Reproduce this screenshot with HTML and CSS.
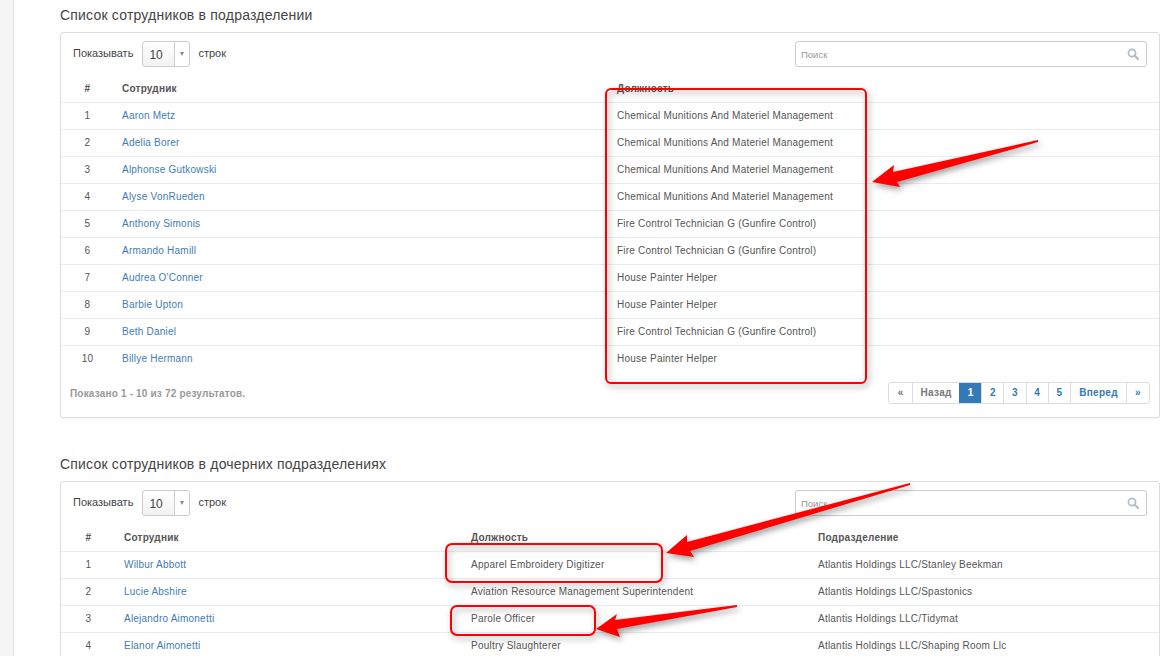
FILE: index.html
```html
<!DOCTYPE html>
<html lang="en">
<head>
  <meta charset="UTF-8" />
  <title>Подразделение</title>
  <link rel="stylesheet" href="styles.css">
</head>
<body>
  <div class="sidebar"></div>
  <div class="content">
    <h4 class="section-title">Список сотрудников в подразделении</h4>
    <div class="panel">
      <div class="toolbar">
        <span class="toolbar-label">Показывать</span>
        <div class="page-size"><span class="page-size-value">10</span><span class="page-size-caret"></span></div>
        <span class="toolbar-label">строк</span>
        <div class="search">
          <input type="text" placeholder="Поиск" />
          <svg width="12" height="12" viewBox="0 0 12 12"><circle cx="5" cy="5" r="3.6" fill="none" stroke="#b4bcc8" stroke-width="1.7"/><path d="M7.8 7.8L11 11" stroke="#b4bcc8" stroke-width="2.2" stroke-linecap="round"/></svg>
        </div>
      </div>
      <table class="staff staff-main">
        <thead>
          <tr><th class="num">#</th><th>Сотрудник</th><th>Должность</th></tr>
        </thead>
        <tbody>
          <tr><td class="num">1</td><td><a href="#">Aaron Metz</a></td><td>Chemical Munitions And Materiel Management</td></tr>
          <tr><td class="num">2</td><td><a href="#">Adelia Borer</a></td><td>Chemical Munitions And Materiel Management</td></tr>
          <tr><td class="num">3</td><td><a href="#">Alphonse Gutkowski</a></td><td>Chemical Munitions And Materiel Management</td></tr>
          <tr><td class="num">4</td><td><a href="#">Alyse VonRueden</a></td><td>Chemical Munitions And Materiel Management</td></tr>
          <tr><td class="num">5</td><td><a href="#">Anthony Simonis</a></td><td>Fire Control Technician G (Gunfire Control)</td></tr>
          <tr><td class="num">6</td><td><a href="#">Armando Hamill</a></td><td>Fire Control Technician G (Gunfire Control)</td></tr>
          <tr><td class="num">7</td><td><a href="#">Audrea O'Conner</a></td><td>House Painter Helper</td></tr>
          <tr><td class="num">8</td><td><a href="#">Barbie Upton</a></td><td>House Painter Helper</td></tr>
          <tr><td class="num">9</td><td><a href="#">Beth Daniel</a></td><td>Fire Control Technician G (Gunfire Control)</td></tr>
          <tr><td class="num">10</td><td><a href="#">Billye Hermann</a></td><td>House Painter Helper</td></tr>
        </tbody>
      </table>
      <div class="panel-footer">
        <span class="summary">Показано 1 - 10 из 72 результатов.</span>
        <div class="pager">
          <a class="muted w-arrow" href="#">«</a>
          <a class="muted w-prev" href="#">Назад</a>
          <a class="current w-num" href="#">1</a>
          <a class="w-num" href="#">2</a>
          <a class="w-num" href="#">3</a>
          <a class="w-num" href="#">4</a>
          <a class="w-num" href="#">5</a>
          <a class="w-next" href="#">Вперед</a>
          <a class="w-arrow" href="#">»</a>
        </div>
      </div>
    </div>

    <h4 class="section-title section-title-second">Список сотрудников в дочерних подразделениях</h4>
    <div class="panel">
      <div class="toolbar">
        <span class="toolbar-label">Показывать</span>
        <div class="page-size"><span class="page-size-value">10</span><span class="page-size-caret"></span></div>
        <span class="toolbar-label">строк</span>
        <div class="search">
          <input type="text" placeholder="Поиск" />
          <svg width="12" height="12" viewBox="0 0 12 12"><circle cx="5" cy="5" r="3.6" fill="none" stroke="#b4bcc8" stroke-width="1.7"/><path d="M7.8 7.8L11 11" stroke="#b4bcc8" stroke-width="2.2" stroke-linecap="round"/></svg>
        </div>
      </div>
      <table class="staff staff-child">
        <thead>
          <tr><th class="num">#</th><th>Сотрудник</th><th>Должность</th><th>Подразделение</th></tr>
        </thead>
        <tbody>
          <tr><td class="num">1</td><td><a href="#">Wilbur Abbott</a></td><td>Apparel Embroidery Digitizer</td><td>Atlantis Holdings LLC/Stanley Beekman</td></tr>
          <tr><td class="num">2</td><td><a href="#">Lucie Abshire</a></td><td>Aviation Resource Management Superintendent</td><td>Atlantis Holdings LLC/Spastonics</td></tr>
          <tr><td class="num">3</td><td><a href="#">Alejandro Aimonetti</a></td><td>Parole Officer</td><td>Atlantis Holdings LLC/Tidymat</td></tr>
          <tr><td class="num">4</td><td><a href="#">Elanor Aimonetti</a></td><td>Poultry Slaughterer</td><td>Atlantis Holdings LLC/Shaping Room Llc</td></tr>
        </tbody>
      </table>
    </div>
  </div>

  <!-- red marks drawn on top of the screenshot -->
  <svg class="marks" width="1175" height="656" viewBox="0 0 1175 656">
    <g fill="none" stroke="#f00" stroke-width="2">
      <rect x="606" y="89" width="260" height="294" rx="5"/>
      <rect x="446" y="544" width="216" height="38" rx="6"/>
      <rect x="451" y="606" width="144" height="29" rx="6"/>
    </g>
    <g fill="#f00">
      <polygon points="1038,140 1038,142 897,182 900,187 872,182 894,165 893,172"/>
      <polygon points="910,483 910,485 690,551 694,557 666,553 687,535 687,542"/>
      <polygon points="737,605 737,607 617,629 620,637 596,629 617,614 615,620"/>
    </g>
  </svg>
</body>
</html>
```

FILE: styles.css
```css
html, body {
  margin: 0;
  height: 656px;
  overflow: hidden;
}
body {
  font-family: "Liberation Sans", Arial, sans-serif;
  font-size: 10px;
  color: #555;
  background: white;
  display: flex;
  position: relative;
}
.sidebar {
  width: 13px;
  flex: none;
  background: #f5f5f5;
  border-right: 1px solid #e7e7e7;
}
.content {
  flex: 1;
  padding: 0 15px 0 46px;
}
.section-title {
  margin: 0;
  height: 32px;
  line-height: 31px;
  font-size: 14px;
  font-weight: normal;
  color: #444;
  letter-spacing: .2px;
}
.section-title-second {
  height: 63px;
  line-height: 34px;
  display: flex;
  align-items: flex-end;
}
.panel {
  border: 1px solid #ddd;
  border-radius: 3px;
  box-shadow: 0 1px 1px rgba(0,0,0,0.05);
  background: white;
}

.toolbar {
  display: flex;
  align-items: center;
  height: 26px;
  padding: 8px 12px 0 12px;
}
.toolbar-label {
  font-size: 11px;
  color: #444;
  margin-top: -2px;
}
.page-size {
  display: flex;
  width: 46px;
  height: 24px;
  margin: 0 8px 0 9px;
  border: 1px solid #ccc;
  border-radius: 3px;
  background: linear-gradient(#fff, #f2f2f2);
}
.page-size-value {
  flex: 1;
  padding-left: 6px;
  font-size: 12px;
  line-height: 26px;
  color: #444;
}
.page-size-caret {
  width: 14px;
  border-left: 1px solid #ccc;
  background: white;
  border-radius: 0 3px 3px 0;
  display: flex;
  justify-content: center;
  align-items: center;
}
.page-size-caret::after {
  content: "";
  border-top: 4px solid #888;
  border-left: 2.5px solid transparent;
  border-right: 2.5px solid transparent;
}
.search {
  display: flex;
  align-items: center;
  width: 350px;
  height: 24px;
  margin-left: auto;
  border: 1px solid #ccc;
  border-radius: 3px;
}
.search input {
  flex: 1;
  min-width: 0;
  border: none;
  outline: none;
  padding: 0 5px;
  font-family: inherit;
  font-size: 9.5px;
  background: transparent;
}
.search input::placeholder {
  color: #999;
}
.search svg {
  margin-right: 7px;
}

.staff {
  width: 100%;
  table-layout: fixed;
  border-collapse: collapse;
  margin-top: 8px;
  letter-spacing: .22px;
}
.staff th {
  height: 27px;
  padding: 0 10px;
  text-align: left;
  font-weight: bold;
  color: #555;
}
.staff td {
  height: 24px;
  padding: 0 10px 2px;
  border-top: 1px solid #e7ecf1;
}
.staff .num {
  text-align: center;
  padding-left: 11px;
  padding-right: 9px;
}
.staff a {
  color: #3f7cb5;
  text-decoration: none;
}
.staff-main th:nth-child(1) { width: 31px; }
.staff-main th:nth-child(2) { width: 475px; }
.staff-child th:nth-child(1) { width: 33px; }
.staff-child th:nth-child(2) { width: 327px; }
.staff-child th:nth-child(3) { width: 327px; }

.panel-footer {
  display: flex;
  justify-content: space-between;
  align-items: center;
  height: 41px;
  padding: 0 9px 4px 9px;
}
.summary {
  font-weight: bold;
  font-size: 10px;
  letter-spacing: .18px;
  color: #999;
  margin-top: 2px;
}
.pager {
  display: flex;
  height: 22px;
  border: 1px solid #ddd;
  border-radius: 3px;
  box-sizing: border-box;
}
.pager a {
  display: flex;
  justify-content: center;
  align-items: center;
  box-sizing: border-box;
  border-left: 1px solid #ddd;
  font-weight: bold;
  font-size: 10px;
  letter-spacing: .3px;
  color: #337ab7;
  text-decoration: none;
}
.pager a:first-child {
  border-left: none;
}
.pager .muted {
  color: #777;
}
.pager .current {
  background: #337ab7;
  border-color: #337ab7;
  color: white;
}
.w-arrow { width: 23px; }
.w-prev { width: 47px; }
.w-num { width: 22.2px; }
.w-next { width: 56px; }

.marks {
  position: absolute;
  left: 0;
  top: 0;
  pointer-events: none;
  filter: drop-shadow(2px 3px 3px rgba(0,0,0,0.4));
}
```
